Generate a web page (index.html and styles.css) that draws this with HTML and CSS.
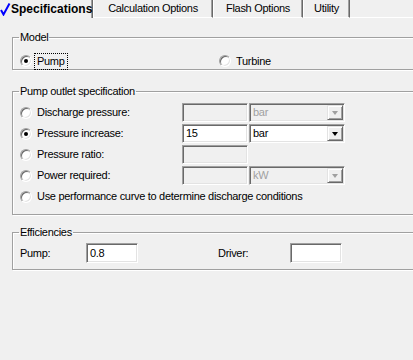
FILE: index.html
```html
<!DOCTYPE html>
<html lang="en">
<head>
	<meta charset="UTF-8">
	<title>Pump</title>
	<link rel="stylesheet" href="styles.css">
</head>
<body>
	<div class="tabs">
		<div class="tab tab-on">
			<svg class="check" width="11" height="14" viewBox="0 0 11 14"><polyline points="1,8 3.5,12.5 9.5,1.5" fill="none" stroke="#0000ff" stroke-width="2"/></svg>
			<span>Specifications</span>
		</div>
		<div class="tab tab-calc">Calculation Options</div>
		<div class="tab tab-flash">Flash Options</div>
		<div class="tab tab-util">Utility</div>
		<div class="tab-fill"></div>
	</div>

	<div class="page">
		<fieldset class="group g-model">
			<legend>Model</legend>
			<div class="model-row">
				<div class="opt"><span class="radio on"></span><span class="focus">Pump</span></div>
				<div class="opt"><span class="radio"></span><span>Turbine</span></div>
			</div>
		</fieldset>

		<fieldset class="group g-outlet">
			<legend>Pump outlet specification</legend>
			<div class="spec-grid">
				<div class="opt"><span class="radio"></span><span>Discharge pressure:</span></div>
				<div class="box off"></div>
				<div class="combo off"><span class="combo-txt">bar</span><span class="combo-btn"><i></i></span></div>

				<div class="opt"><span class="radio on"></span><span>Pressure increase:</span></div>
				<div class="box">15</div>
				<div class="combo"><span class="combo-txt">bar</span><span class="combo-btn"><i></i></span></div>

				<div class="opt"><span class="radio"></span><span>Pressure ratio:</span></div>
				<div class="box off"></div>
				<div></div>

				<div class="opt"><span class="radio"></span><span>Power required:</span></div>
				<div class="box off"></div>
				<div class="combo off"><span class="combo-txt">kW</span><span class="combo-btn"><i></i></span></div>

				<div class="opt wide"><span class="radio"></span><span>Use performance curve to determine discharge conditions</span></div>
			</div>
		</fieldset>

		<fieldset class="group g-eff">
			<legend>Efficiencies</legend>
			<div class="eff-row">
				<span>Pump:</span>
				<div class="box eff-box">0.8</div>
				<span></span>
				<span>Driver:</span>
				<div class="box eff-box"></div>
			</div>
		</fieldset>
	</div>
</body>
</html>
```

FILE: styles.css
```css
* {margin: 0; padding: 0; box-sizing: border-box;}
body {width: 413px; height: 360px; overflow: hidden; background: #f0f0f0; color: #000; font: 11px/13px "Liberation Sans", Arial, sans-serif; letter-spacing: -0.3px;}

/* tabs */
.tabs {display: flex; height: 18px;}
.tab {height: 18px; line-height: 16px; text-align: center; border-left: 1px solid #fff; border-right: 1px solid #696969; border-bottom: 1px solid #fff; box-shadow: inset -1px 0 #a0a0a0;}
.tab-on {width: 93px; display: flex; align-items: center; border-left: none; border-bottom: none; text-align: left;}
.tab-on span {font-weight: bold; font-size: 12px; letter-spacing: 0; margin-left: 0;}
.check {flex: none;}
.tab-calc {width: 120px;}
.tab-flash {width: 90px;}
.tab-util {width: 47px;}
.tab-fill {flex: 1; border-bottom: 1px solid #fff;}

/* groups */
.page {padding-left: 12px;}
.group {width: 420px; border: 1px solid #a0a0a0; box-shadow: inset 1px 1px #fff, 1px 1px #fff; padding: 0 0 0 7px;}
.group legend {padding: 0 1px; margin-left: -1px; line-height: 13px;}
.g-model {margin-top: 13px; padding-bottom: 0;}
.g-outlet {margin-top: 15px; padding-bottom: 8px;}
.g-eff {margin-top: 11px; padding-bottom: 6px;}

.opt {display: flex; align-items: center; height: 19px;}
.radio {width: 12px; height: 12px; margin-right: 5px; flex: none; border-radius: 50%; background: #fff; border: 1px solid; border-color: #a0a0a0 #fff #fff #a0a0a0; box-shadow: inset 1px 1px #696969, inset -1px -1px #e3e3e3; display: flex; align-items: center; justify-content: center;}
.radio.on::after {content: ""; width: 4px; height: 4px; border-radius: 50%; background: #000;}
.focus {outline: 1px dotted #000; outline-offset: 1px; padding: 0 1px; margin-left: -1px;}

.model-row {display: grid; grid-template-columns: 199px 1fr; margin-top: 9px; height: 16px;}
.model-row .opt {height: 16px;}

.spec-grid {display: grid; grid-template-columns: 161px 66px 96px; grid-auto-rows: 19px; column-gap: 1px; row-gap: 2px; margin-top: 5px;}
.wide {grid-column: 1 / 4;}

.box {height: 19px; background: #fff; padding-left: 3px; line-height: 17px; border: 1px solid; border-color: #a0a0a0 #fff #fff #a0a0a0; box-shadow: inset 1px 1px #696969, inset -1px -1px #e3e3e3;}
.box.off {background: #f0f0f0;}

.combo {display: flex; height: 19px; background: #fff; border: 1px solid; border-color: #a0a0a0 #fff #fff #a0a0a0; box-shadow: inset 1px 1px #696969, inset -1px -1px #e3e3e3; padding: 1px;}
.combo-txt {flex: 1; padding-left: 2px; line-height: 15px;}
.combo-btn {width: 16px; flex: none; background: #f0f0f0; border: 1px solid; border-color: #e3e3e3 #696969 #696969 #e3e3e3; box-shadow: inset 1px 1px #fff, inset -1px -1px #a0a0a0; display: flex; align-items: center; justify-content: center;}
.combo-btn i {width: 0; height: 0; border-top: 4px solid #000; border-left: 3.5px solid transparent; border-right: 3.5px solid transparent; margin-top: 1px;}
.combo.off {background: #f0f0f0;}
.combo.off .combo-txt {color: #a0a0a0;}
.combo.off .combo-btn i {border-top-color: #a0a0a0;}

.eff-row {display: grid; grid-template-columns: 66px 52px 80px 72px 52px; align-items: center; margin-top: 4px;}
.eff-box {height: 20px; line-height: 18px;}
```
